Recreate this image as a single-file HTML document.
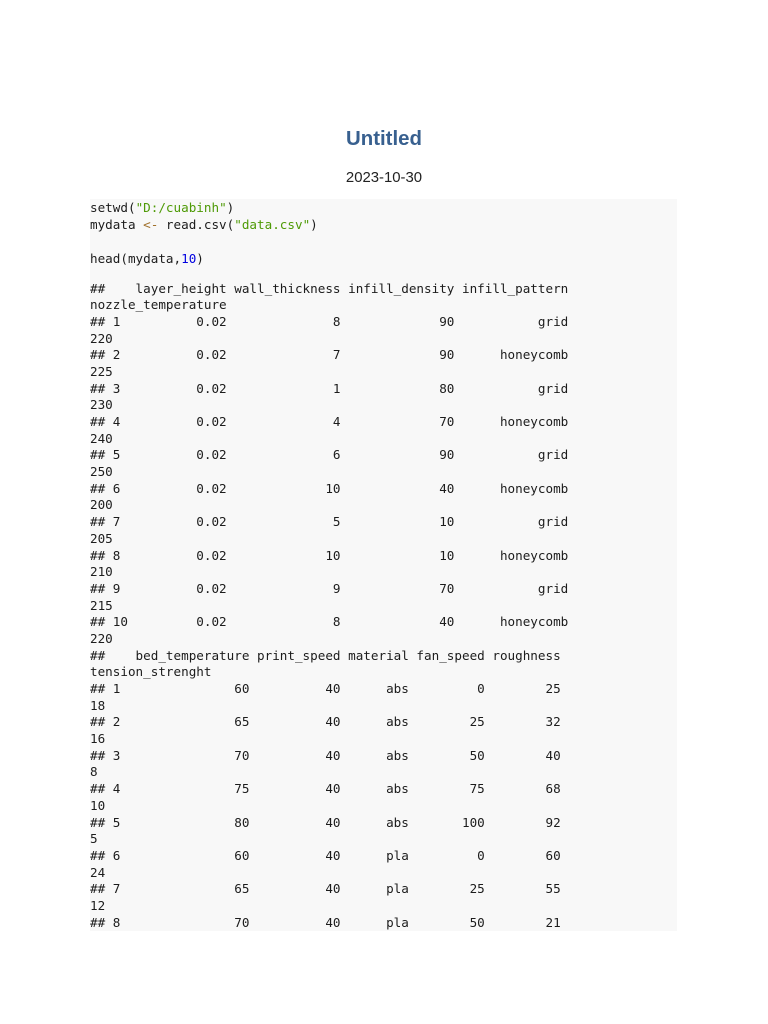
<!DOCTYPE html>
<html>
<head>
<meta charset="utf-8">
<title>Untitled</title>
<style>
html,body{margin:0;padding:0;background:#fff;}
body{width:768px;height:1024px;position:relative;overflow:hidden;}
.t{position:absolute;left:0;width:768px;text-align:center;font-family:"Liberation Sans",sans-serif;white-space:nowrap;}
#title{left:0;top:127px;font-size:20.4px;line-height:24px;font-weight:bold;color:#38608f;}
#date{top:169px;font-size:14.9px;line-height:18px;color:#222;}
#bg{position:absolute;left:90px;top:199px;width:587px;height:732px;background:#f8f8f8;}
pre{position:absolute;left:90px;margin:0;font-family:"DejaVu Sans Mono","Liberation Mono",monospace;font-size:12.62px;color:#1c1c1c;white-space:pre;}
#code{top:199px;line-height:17px;}
#out{top:280.5px;line-height:16.68px;height:650.5px;overflow:hidden;}
.s{color:#4e9a06;}
.o{color:#a0702a;}
.n{color:#0000e0;}
</style>
</head>
<body>
<div id="title" class="t">Untitled</div>
<div id="date" class="t">2023-10-30</div>
<div id="bg"></div>
<pre id="code">setwd(<span class="s">"D:/cuabinh"</span>)
mydata <span class="o">&lt;-</span> read.csv(<span class="s">"data.csv"</span>)

head(mydata,<span class="n">10</span>)</pre>
<pre id="out">##    layer_height wall_thickness infill_density infill_pattern
nozzle_temperature
## 1          0.02              8             90           grid
220
## 2          0.02              7             90      honeycomb
225
## 3          0.02              1             80           grid
230
## 4          0.02              4             70      honeycomb
240
## 5          0.02              6             90           grid
250
## 6          0.02             10             40      honeycomb
200
## 7          0.02              5             10           grid
205
## 8          0.02             10             10      honeycomb
210
## 9          0.02              9             70           grid
215
## 10         0.02              8             40      honeycomb
220
##    bed_temperature print_speed material fan_speed roughness
tension_strenght
## 1               60          40      abs         0        25
18
## 2               65          40      abs        25        32
16
## 3               70          40      abs        50        40
8
## 4               75          40      abs        75        68
10
## 5               80          40      abs       100        92
5
## 6               60          40      pla         0        60
24
## 7               65          40      pla        25        55
12
## 8               70          40      pla        50        21</pre>
</body>
</html>
